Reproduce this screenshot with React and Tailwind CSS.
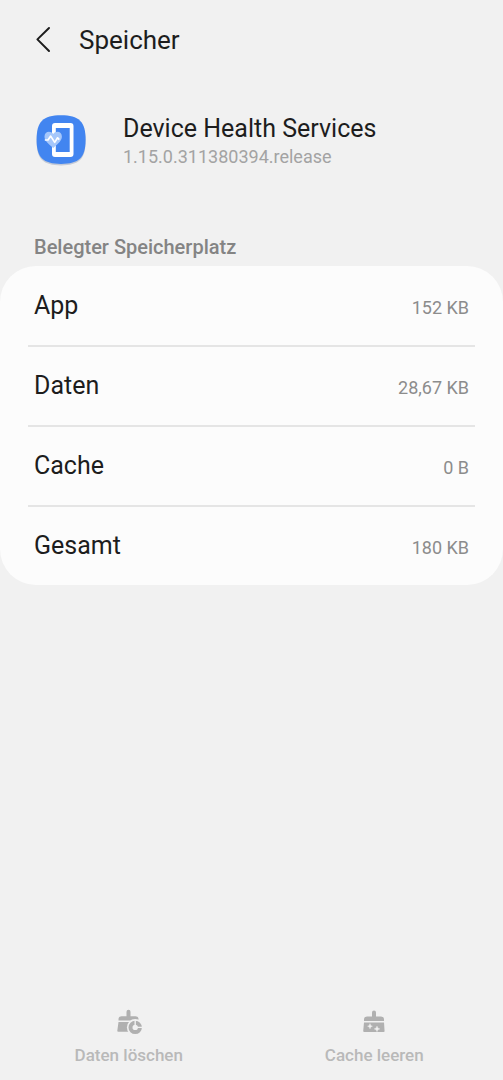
import React from "react";

const usage = [
  { label: "App", value: "152 KB" },
  { label: "Daten", value: "28,67 KB" },
  { label: "Cache", value: "0 B" },
  { label: "Gesamt", value: "180 KB" },
];

function BackIcon() {
  return (
    <svg viewBox="0 0 16 28" className="h-7 w-4" fill="none" stroke="#1d1d1d" strokeWidth="2" strokeLinecap="round" strokeLinejoin="round" aria-hidden="true">
      <path d="M14 2 2.4 13.4 14 25" />
    </svg>
  );
}

function AppIcon() {
  return (
    <svg viewBox="0 1 52 52" className="size-[52px] shrink-0" aria-hidden="true">
      <path d="M26 2.6C44 2.6 50.6 9 50.6 27S44 51.4 26 51.4 1.6 45 1.6 27 8 2.6 26 2.6Z" fill="#c4cad6" />
      <path d="M26 1.2C44 1.2 50.6 7.6 50.6 25.6S44 50 26 50 1.6 43.6 1.6 25.6 8 1.2 26 1.2Z" fill="#4285f0" />
      <path fillRule="evenodd" d="M20 9h15.500a3 3 0 0 1 3 3v28a3 3 0 0 1-3 3H20a3 3 0 0 1-3-3V12a3 3 0 0 1 3-3Zm.8 5v24h13.900V14Z" fill="#fff" />
      <path d="M18.200 34c-5.600-4.800-8.700-7.600-8.700-11.500 0-2.800 2-4.700 4.500-4.700 1.600 0 3.200.8 4.200 2.200 1-1.400 2.600-2.200 4.200-2.200 2.500 0 4.500 1.900 4.500 4.700 0 3.900-3.100 6.700-8.700 11.500Z" fill="#a5c7fb" />
      <path d="M9.800 26h3.200l2.700-3.900 4 6.300 2.900-4.600 1.700 1.800" fill="none" stroke="#fff" strokeWidth="1.700" strokeLinejoin="round" />
    </svg>
  );
}

function ClearDataIcon() {
  return (
    <svg viewBox="0 0 28 28" className="size-7" aria-hidden="true">
      <path d="M3.500 13.600v-1.400a3 3 0 0 1 3-3h5V4.800a2 2 0 0 1 4 0v4.400h5a3 3 0 0 1 3 3v1.400Z" fill="#b0b0b0" />
      <path d="M3.500 15h20v9.800H3.200a.9.900 0 0 1-.9-1Z" fill="#b0b0b0" />
      <circle cx="20.200" cy="20.400" r="8.300" fill="#f1f1f1" />
      <circle cx="20.200" cy="20.400" r="4.700" fill="none" stroke="#b0b0b0" strokeWidth="4" />
      <path d="M20.200 13v7.400h7.300" fill="none" stroke="#f1f1f1" strokeWidth="1.400" />
    </svg>
  );
}

function ClearCacheIcon() {
  return (
    <svg viewBox="0 0 28 28" className="size-7" aria-hidden="true">
      <path d="M4 14v-1.500a3 3 0 0 1 3-3h5V5.500a2 2 0 0 1 4 0v4h5a3 3 0 0 1 3 3V14Z" fill="#b0b0b0" />
      <path d="M4 15.600h20l.6 8.400a1 1 0 0 1-1 1H4.200a1 1 0 0 1-1-1Z" fill="#b0b0b0" />
      <path d="m10 16.500.8 1.900 1.700.8-1.700.8-.8 1.900-.8-1.900-1.700-.8 1.700-.8ZM17 19l.9 2 2 .9-2 .9-.9 2-.9-2-2-.9 2-.9Z" fill="#f1f1f1" stroke="#f1f1f1" strokeWidth=".3" />
    </svg>
  );
}

function FooterAction({ icon, label }) {
  return (
    <button type="button" disabled className="flex flex-1 flex-col items-center gap-2 text-[17px] leading-6 font-medium text-[#b9b9b9]">
      {icon}
      <span>{label}</span>
    </button>
  );
}

export default function App() {
  return (
    <div className="flex min-h-screen flex-col bg-[#f1f1f1] font-[Roboto,sans-serif] text-[#1d1d1d]">
      <header className="flex h-20 items-center gap-7 px-[35px]">
        <button type="button" aria-label="Zurück">
          <BackIcon />
        </button>
        <h1 className="text-[26px] leading-8">Speicher</h1>
      </header>

      <main className="flex-1">
        <section className="flex items-center gap-9 px-[35px] pt-[33px]">
          <AppIcon />
          <div>
            <h2 className="text-[25px] leading-8">Device Health Services</h2>
            <p className="text-lg leading-6 text-[#a3a3a3]">1.15.0.311380394.release</p>
          </div>
        </section>

        <section className="pt-[66px]">
          <h3 className="px-[34px] pb-[7px] text-xl leading-6 font-medium text-[#848484]">Belegter Speicherplatz</h3>
          <dl className="rounded-[36px] bg-[#fcfcfc] px-7 pt-px">
            {usage.map((item) => (
              <div key={item.label} className="flex items-baseline justify-between border-b-2 border-[#e5e5e5] px-[6px] py-[23px] last:border-b-0">
                <dt className="text-[25px] leading-8">{item.label}</dt>
                <dd className="text-lg leading-6 text-[#8c8c8c]">{item.value}</dd>
              </div>
            ))}
          </dl>
        </section>
      </main>

      <footer className="flex px-[6px] pb-[13px]">
        <FooterAction icon={<ClearDataIcon />} label="Daten löschen" />
        <FooterAction icon={<ClearCacheIcon />} label="Cache leeren" />
      </footer>
    </div>
  );
}
